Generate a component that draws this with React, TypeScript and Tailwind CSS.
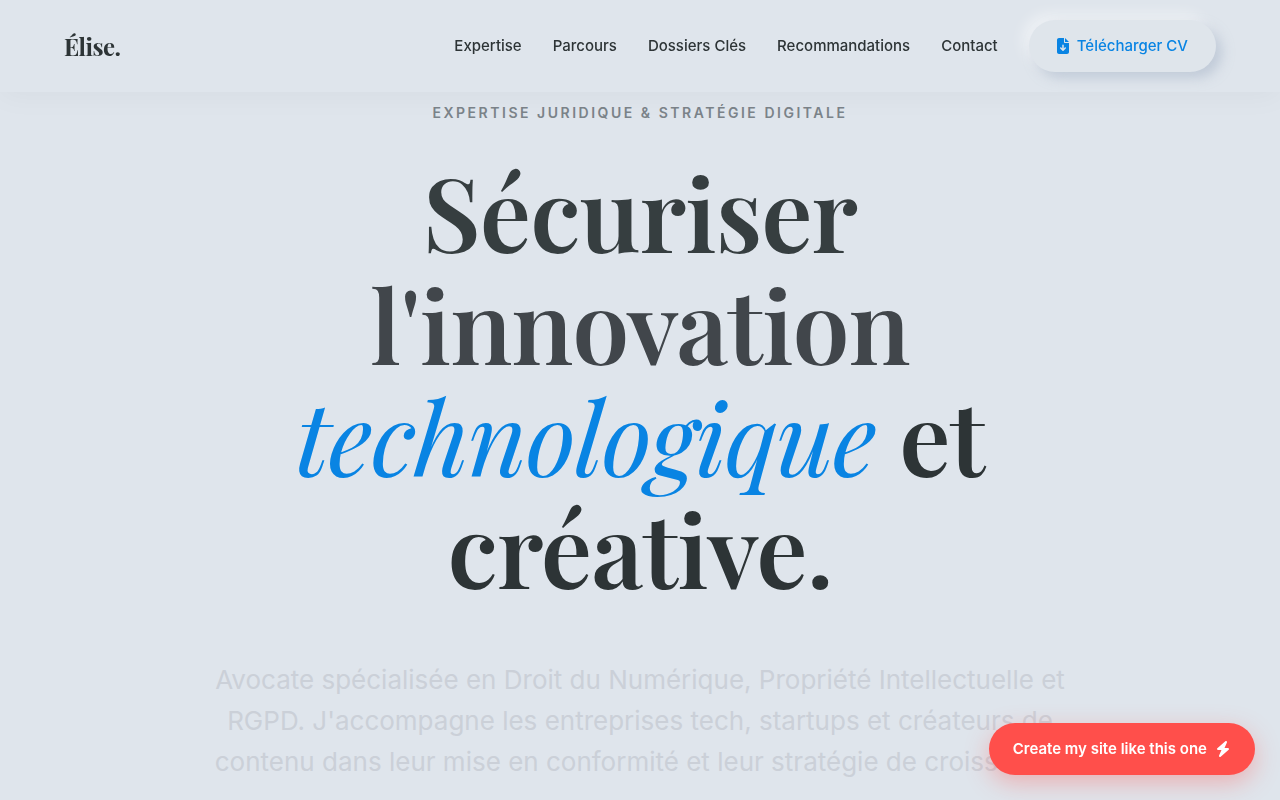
import { FaBolt, FaFileArrowDown } from 'react-icons/fa6';

const navLinks = [
  { label: 'Expertise', href: '#expertise' },
  { label: 'Parcours', href: '#parcours' },
  { label: 'Dossiers Clés', href: '#dossiers' },
  { label: 'Recommandations', href: '#recommandations' },
  { label: 'Contact', href: '#contact' },
];

const Header: React.FC = () => {
  return (
    <header className="fixed inset-x-0 top-0 z-20 flex items-center justify-between bg-[#dfe5ec] px-16 py-5 shadow-[0_4px_30px_rgba(0,0,0,0.04)]">
      <a
        href="#accueil"
        className="font-['Playfair_Display','Liberation_Serif',serif] text-2xl font-bold tracking-tight text-[#2d3436]"
      >
        Élise.
      </a>
      <nav className="flex items-center gap-[31px] text-[15px] font-medium text-[#2d3436]">
        {navLinks.map((link) => (
          <a key={link.href} href={link.href}>
            {link.label}
          </a>
        ))}
        <a
          href="#cv"
          className="flex h-[52px] items-center gap-2 rounded-full bg-[#dfe5eb] px-7 text-[#0984e3] shadow-[6px_6px_12px_rgba(163,177,198,0.5),-6px_-6px_14px_rgba(255,255,255,0.5)]"
        >
          <FaFileArrowDown className="h-4 w-3" />
          Télécharger CV
        </a>
      </nav>
    </header>
  );
};

const Hero: React.FC = () => {
  return (
    <section id="accueil" className="px-5 pt-[103px] pb-16 text-center">
      <p className="text-sm font-semibold tracking-[0.18em] text-[#7b8389] uppercase">
        Expertise juridique & stratégie digitale
      </p>
      <h1 className="mt-8 font-['Playfair_Display','Liberation_Serif',serif] text-[102px] leading-[112px] font-semibold tracking-[-0.01em] text-[#2d3436]">
        <span className="block text-[#363e40]">Sécuriser</span>
        <span className="block text-[#41464b]">l'innovation</span>
        <span className="block">
          <em className="font-normal text-[#0984e3]">technologique</em> et
        </span>
        <span className="block">créative.</span>
      </h1>
      <p className="mx-auto mt-14 max-w-[900px] text-[26px] leading-[41px] text-[#cbd0d8]">
        Avocate spécialisée en Droit du Numérique, Propriété Intellectuelle et RGPD. J'accompagne
        les entreprises tech, startups et créateurs de contenu dans leur mise en conformité et leur
        stratégie de croissance.
      </p>
    </section>
  );
};

export default function App() {
  return (
    <div className="min-h-screen bg-[#dfe5ec] font-['Inter',sans-serif]">
      <Header />
      <main>
        <Hero />
      </main>
      <a
        href="#creer"
        className="fixed right-[25px] bottom-[25px] z-30 flex h-[52px] items-center gap-2 rounded-full bg-[#ff4f4b] px-6 text-[15px] font-semibold text-white shadow-[0_8px_24px_rgba(255,79,75,0.35)]"
      >
        Create my site like this one
        <FaBolt className="h-4 w-4" />
      </a>
    </div>
  );
}
